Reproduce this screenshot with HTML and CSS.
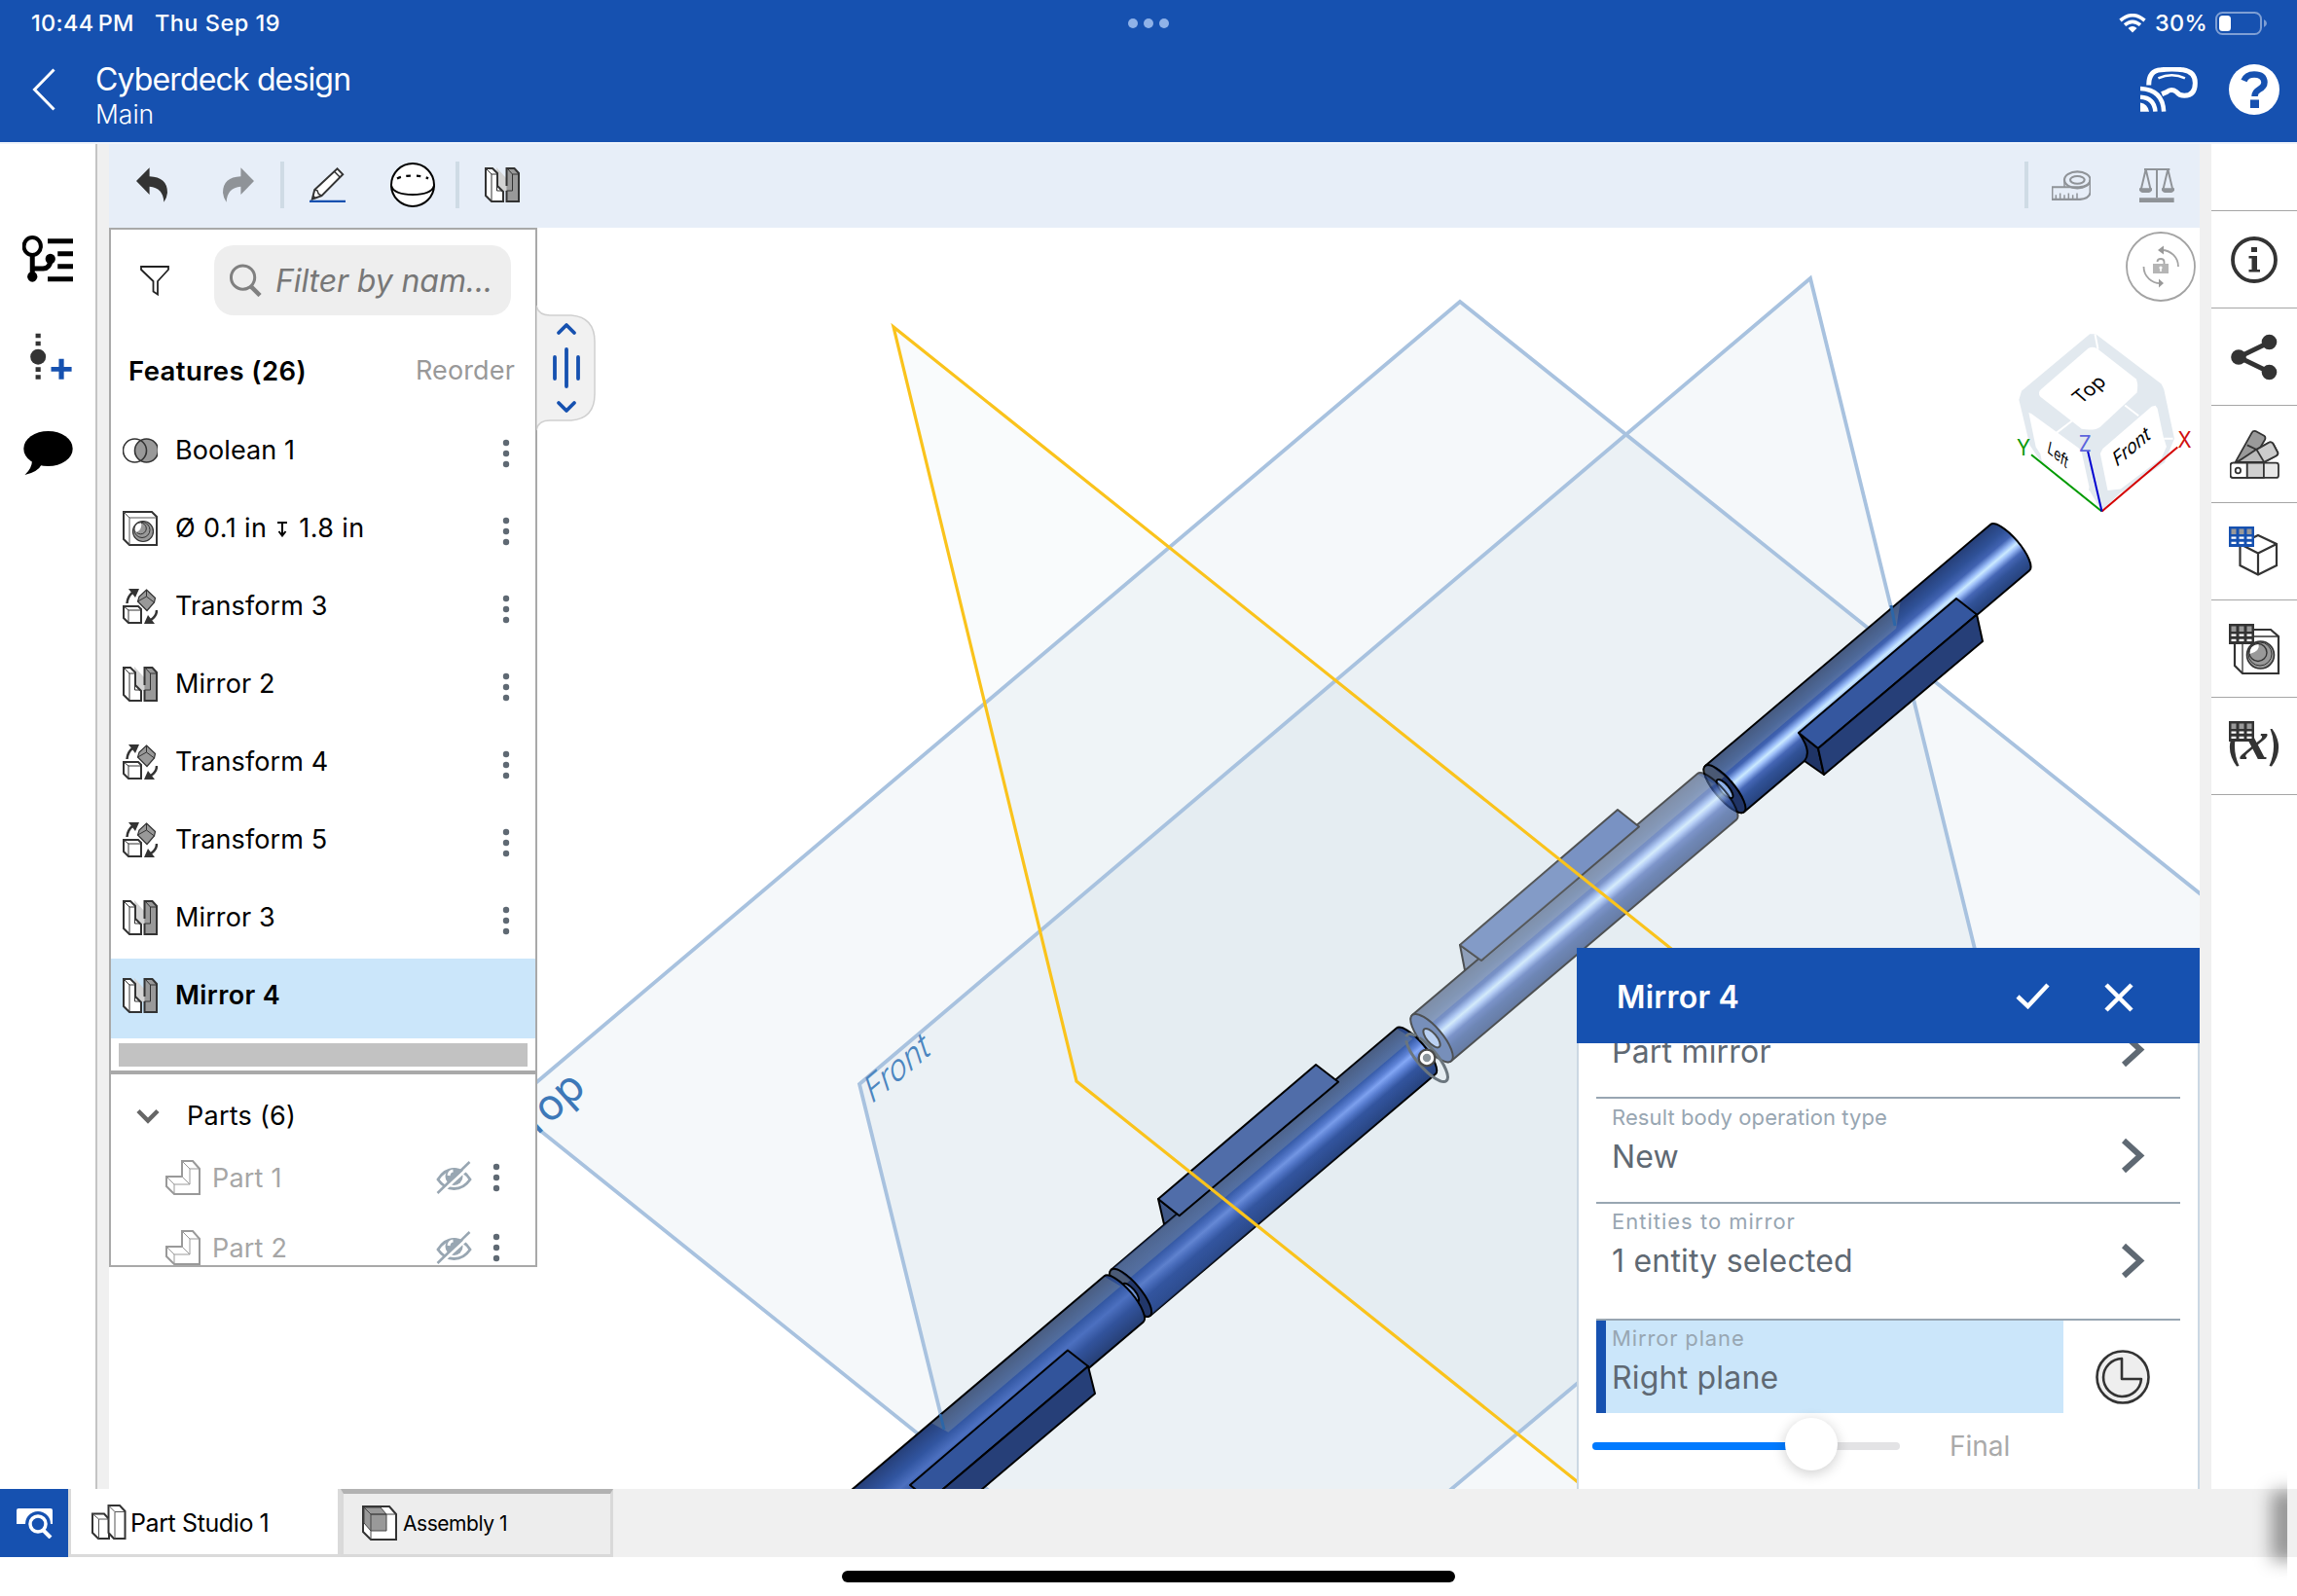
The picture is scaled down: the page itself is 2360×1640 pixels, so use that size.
FILE: index.html
```html
<!DOCTYPE html>
<html lang="en">
<head>
<meta charset="utf-8">
<title>Cyberdeck design</title>
<link rel="stylesheet" href="styles.css">
</head>
<body>
<svg class="defs" width="0" height="0">
  <symbol id="dots" viewBox="0 0 8 30"><g fill="#5f6973"><circle cx="4" cy="4" r="3.2"/><circle cx="4" cy="15" r="3.2"/><circle cx="4" cy="26" r="3.2"/></g></symbol>
  <symbol id="hole" viewBox="0 0 36 36"><path d="M1 1H30L35 6V35H7L1 29Z" fill="#fff" stroke="#333" stroke-width="2"/><path d="M1 1L7 7V35M7 7H35" fill="none" stroke="#555" stroke-width="1"/><circle cx="21" cy="21" r="10.5" fill="#999" stroke="#333" stroke-width="1.2"/><circle cx="20" cy="19.500" r="8" fill="#999" stroke="#333" stroke-width="1"/><circle cx="18.500" cy="18" r="5.800" fill="#999" stroke="#333" stroke-width="1"/><path d="M14 22a5.800 5.800 0 0 1 5-9.500c1 4-1 8-5 9.500Z" fill="#fff"/></symbol>
  <symbol id="transform" viewBox="0 0 36 36"><path d="M24.500 1L33.500 9.500L32.500 14L25 22.500L15.500 13L17 8Z" fill="#999" stroke="#333" stroke-width="1.200"/><path d="M24.500 1V8L15.500 13M24.500 8L32.500 14" fill="none" stroke="#333" stroke-width="1"/><path d="M1 18H16L19 21V35H6L1 30Z" fill="#fff" stroke="#333" stroke-width="2"/><path d="M1 18L6 22V35M6 22H19" fill="none" stroke="#333" stroke-width="1"/><path d="M4.500 15Q5 8 10 4M35 22Q35 28 29 32" fill="none" stroke="#333" stroke-width="2.500"/><path d="M6 0H17L13 9ZM33 36H22L26 27Z" fill="#333"/></symbol>
  <symbol id="mirror" viewBox="0 0 36 36"><path d="M12 0L23 12V25L13 23Z" fill="#d3d3d3"/><path d="M1 1H8L13 6V19L19 25V35H7L1 29Z" fill="#fff" stroke="#333" stroke-width="2"/><path d="M1 1L7 7V35M7 7H13" fill="none" stroke="#333" stroke-width="1"/><path d="M12.500 7V24H18" fill="none" stroke="#333" stroke-width="1"/><path d="M22 1H30L35 6V35H22.500V24Z" fill="#999"/><path d="M22.500 19V1H30.500L35 6V35H22.500V24" fill="none" stroke="#333" stroke-width="2"/><path d="M22.500 24H28.500V7H35M23 1L28.500 7" fill="none" stroke="#333" stroke-width="1"/></symbol>
  <symbol id="part" viewBox="0 0 36 36"><path d="M17 1H28L35 9V35H9L1 27V17H17Z" fill="#fff" stroke="#999" stroke-width="2"/><path d="M17 1L25 9H35M25 9V25H9V35M1 17L9 25M17 17L25 25" fill="none" stroke="#999" stroke-width="1"/></symbol>
  <symbol id="eye" viewBox="0 0 36 34"><path d="M1.500 19Q8 8.500 18 8.500T34.500 19Q28 28.500 18 28.500T1.500 19Z" fill="none" stroke="#98a6b2" stroke-width="2.800"/><circle cx="18" cy="16" r="9" fill="#98a6b2"/><path d="M12.500 15Q13 10.500 17 10" fill="none" stroke="#fff" stroke-width="3"/><path d="M3 34L37 3" stroke="#fff" stroke-width="3"/><path d="M1 33L34 1" stroke="#98a6b2" stroke-width="2.500"/></symbol>
  <symbol id="chev" viewBox="0 0 25 37"><path d="M3 3L20 18.500L3 34" fill="none" stroke="#5f6973" stroke-width="6"/></symbol>
  <symbol id="grid" viewBox="0 0 26 21"><rect width="26" height="21" fill="currentColor"/><g class="gridtop"><rect x="2.500" y="2.500" width="5" height="5.500"/><rect x="10.500" y="2.500" width="5" height="5.500"/><rect x="18.500" y="2.500" width="5" height="5.500"/></g><path d="M2.500 10.500h5v2.300h-5zM10.500 10.500h5v2.300h-5zM18.500 10.500h5v2.300h-5zM2.500 15.700h5v2.300h-5zM10.500 15.700h5v2.300h-5zM18.500 15.700h5v2.300h-5z" fill="#fff"/></symbol>
</svg>

<div class="app">
  <header class="header">
    <div class="status">
      <span class="clock">10:44<i></i>PM</span><span class="date">Thu Sep 19</span>
      <span class="multitask"><b></b><b></b><b></b></span>
      <svg class="wifi" viewBox="0 0 28 20"><g fill="none" stroke="#fff" stroke-width="3.600"><path d="M1.500 7Q14 -3.500 26.500 7"/><path d="M6 11.700Q14 5 22 11.700"/></g><path d="M9.500 15Q14 11 18.500 15L14 19.500Z" fill="#fff"/></svg>
      <span class="pct">30%</span>
      <svg class="batt" viewBox="0 0 54 24"><rect x="1" y="1" width="46" height="22" rx="6.500" fill="none" stroke="#7f9fd4" stroke-width="2"/><rect x="4" y="4" width="12" height="16" rx="3.500" fill="#fff"/><path d="M50 8Q53 9.500 53 12T50 16Z" fill="#7f9fd4"/></svg>
    </div>
    <div class="titlebar">
      <svg class="back" viewBox="0 0 25 44"><path d="M22.500 1.500L2.500 22L22.500 42.500" fill="none" stroke="#fff" stroke-width="3"/></svg>
      <div class="titles"><div class="doc">Cyberdeck design</div><div class="branch">Main</div></div>
      <svg class="vr" viewBox="537 193 176 130" preserveAspectRatio="none"><g fill="none" stroke="#fff"><path d="M563 245Q563 203 600 201Q634 196 668 201Q706 207 705 240Q705 274 672 276Q657 276 648 265Q632 254 618 265L603 271" stroke-width="5"/><path d="M592 225Q634 208 674 225" stroke-width="2.500"/><path d="M537 255Q606 258 609 322M537 280Q580 282 583 322" stroke-width="4.500"/></g><path d="M537 296Q560 300 564 322H537Z" fill="#fff"/></svg>
      <svg class="help" viewBox="0 0 52 52"><circle cx="26" cy="26" r="26" fill="#fff"/><path d="M15.500 17Q18 10.500 26 10.500Q36 10.500 36.500 18.500Q36.500 23 31 26Q26.500 28.500 26.500 33" fill="none" stroke="#1651b0" stroke-width="6.500"/><rect x="22" y="36.500" width="9" height="8.500" fill="#1651b0"/></svg>
    </div>
  </header>

  <div class="main">
    <nav class="leftrail">
      <svg class="tree" viewBox="58 726 132 144" preserveAspectRatio="none"><ellipse cx="84" cy="759" rx="22" ry="27" fill="#fff" stroke="#000" stroke-width="4"/><path d="M84 786V850M84 828H112Q131 826 131 800" fill="none" stroke="#000" stroke-width="5"/><ellipse cx="131" cy="798" rx="13" ry="16"/><ellipse cx="84" cy="853" rx="13" ry="16"/><path d="M124 736h66v15h-66zM150 775h40v15h-40zM150 814h40v15h-40zM124 853h66v15h-66z"/></svg>
      <svg class="node" viewBox="77 1025 108 144" preserveAspectRatio="none"><path d="M91 1027h13v14h-13zM91 1051h13v14h-13zM91 1131h13v14h-13zM91 1155h13v13h-13z" fill="#333"/><ellipse cx="97.500" cy="1099" rx="20" ry="24" fill="#333"/><path d="M151 1105h13v25h20v14h-20v24h-13v-24h-20v-14h20z" fill="#1651b0"/></svg>
      <svg class="chat" viewBox="0 0 51 46"><ellipse cx="25.500" cy="18" rx="25.200" ry="18"/><path d="M9 30Q9 38 1.500 45Q15 42 19 34Z"/></svg>
    </nav>

    <div class="center">
      <div class="toolbar">
        <svg class="undo" viewBox="356 522 80 108" preserveAspectRatio="none"><path d="M356 564L390 523V550Q436 552 436 600Q435 615 427 629Q425 584 390 581V606Z" fill="#333"/></svg>
        <svg class="redo" viewBox="0 0 80 108" preserveAspectRatio="none"><path d="M80 42L46 1V28Q0 30 0 78Q1 93 9 107Q11 62 46 59V84Z" fill="#8f9398"/></svg>
        <i class="sep sep1"></i>
        <svg class="pencil" viewBox="804 518 92 106" preserveAspectRatio="none"><path d="M875 522L889 539L835 604L811 614L817 586Z" fill="#fff" stroke="#333" stroke-width="2"/><path d="M868 531L882 548M817 586L824 588L827 598L835 604" fill="none" stroke="#333" stroke-width="1.500"/><path d="M811 614L814 602L821 610Z" fill="#333"/><path d="M804 621H896" stroke="#1651b0" stroke-width="2.500"/></svg>
        <svg class="sphere" viewBox="0 0 46 46"><circle cx="23" cy="23" r="22" fill="#fff" stroke="#000" stroke-width="2"/><path d="M1 24Q4 33 23 33T45 24" fill="none" stroke="#000" stroke-width="2"/><path d="M7 16.500Q12 13.500 23 13.500T39 16.500" fill="none" stroke="#000" stroke-width="2.200" stroke-dasharray="4.500 5.500"/></svg>
        <i class="sep sep2"></i>
        <svg class="f36 tmirror"><use href="#mirror"/></svg>
        <i class="sep sep3"></i>
        <svg class="tape" viewBox="264 488 120 88" preserveAspectRatio="none"><g fill="none" stroke="#8f9398" stroke-width="2.200"><path d="M265 537H348Q383 535 383 514V552Q380 571 350 573H265Z"/><ellipse cx="343" cy="516" rx="40" ry="24"/><ellipse cx="343" cy="516" rx="22" ry="11"/><path d="M303 516V537M277 573V560M290 573V555M303 573V560M316 573V555M329 573V560M342 573V555" stroke-width="1.500"/></g></svg>
        <svg class="scales" viewBox="534 483 108 98" preserveAspectRatio="none"><g fill="none" stroke="#8f9398" stroke-width="2"><path d="M549 486H628M588 486V568"/><path d="M554 486L539 545M554 486L569 545M622 486L607 545M622 486L637 545"/></g><path d="M534 540h39v7q-4 5-9 6h-21q-5-1-9-6zM603 540h39v7q-4 5-9 6h-21q-5-1-9-6zM534 568h107v13h-107z" fill="#8f9398"/></svg>
      </div>

      <div class="stage">
        <svg class="canvas" viewBox="112 234 2148 1296" width="2148" height="1296">
          <defs>
            <linearGradient id="ga" x1="0" y1="-31" x2="0" y2="31" gradientUnits="userSpaceOnUse"><stop offset="0" stop-color="#263f78"/><stop offset=".22" stop-color="#2f5197"/><stop offset=".36" stop-color="#4163b2"/><stop offset=".46" stop-color="#95b8f6"/><stop offset=".52" stop-color="#cbeaff"/><stop offset=".58" stop-color="#9cbdf8"/><stop offset=".68" stop-color="#4667b6"/><stop offset=".8" stop-color="#315297"/><stop offset="1" stop-color="#26427c"/></linearGradient>
            <linearGradient id="gc" x1="0" y1="-31" x2="0" y2="31" gradientUnits="userSpaceOnUse"><stop offset="0" stop-color="#263f78"/><stop offset=".3" stop-color="#3459a6"/><stop offset=".44" stop-color="#5f84d8"/><stop offset=".51" stop-color="#86aaf8"/><stop offset=".6" stop-color="#5d82d6"/><stop offset=".72" stop-color="#33559f"/><stop offset="1" stop-color="#26427c"/></linearGradient>
            <linearGradient id="gd" x1="0" y1="-31" x2="0" y2="31" gradientUnits="userSpaceOnUse"><stop offset="0" stop-color="#263f78"/><stop offset=".3" stop-color="#3155a0"/><stop offset=".5" stop-color="#4c70c0"/><stop offset=".7" stop-color="#32539c"/><stop offset="1" stop-color="#263f75"/></linearGradient>
            <linearGradient id="dim" x1="0" y1="0" x2="384" y2="0" gradientUnits="userSpaceOnUse"><stop offset="0" stop-color="#33559f" stop-opacity=".55"/><stop offset="1" stop-color="#33559f" stop-opacity="0"/></linearGradient>
            <path id="tube" d="M0 -31H384A10 31 0 0 1 384 31H0A10 31 0 0 1 0 -31Z"/>
          </defs>
          <g fill="#5a90b0" fill-opacity=".06">
            <path d="M523 1136L1500 310L2400 1030V1800H1350Z"/>
            <path d="M883 1114L1860 286L2050 1061L1072 1882Z"/>
            <path d="M918 336L1716 974L2400 1521V1900H2090L1106 1111Z" fill="#6c98b8" fill-opacity=".045"/>
          </g>
          <g fill="none" stroke="#a8c2df" stroke-width="3.800">
            <path d="M1350 1800L523 1136L1500 310L2400 1030"/>
            <path d="M883 1114L1860 286L2050 1061L1072 1882Z"/>
          </g>
          <text class="plane" transform="translate(562 1158) rotate(-42)" x="-22" y="0" font-size="44" fill="#3d78b8">Top</text>
          <text class="plane" transform="translate(895 1135) rotate(-40) skewX(-22)" x="0" y="0" font-size="34" font-weight="300" fill="#4c86c0">Front</text>

          <g stroke-linejoin="round" stroke="#000" stroke-width="2">
            <g transform="translate(1772 810.700) rotate(-40.250)">
              <use href="#tube" fill="url(#ga)"/>
              <path d="M4 -30H262L241 -12H10Z" fill="#c8c8a0" fill-opacity=".2" stroke="none"/>
              <ellipse rx="10" ry="31" fill="#203466"/><path d="M-5 -27Q0 -34 5 -25L8 -10H-9Z" fill="#c8c8a0" fill-opacity=".25" stroke="none"/>
              <ellipse rx="4.500" ry="12" fill="#8fb2ea"/>
            </g>
            <path d="M1848 753L1868 769L1874 796L1854 782Q1862 772 1848 753Z" fill="#1f3466"/>
            <path d="M1848 753L2010 615L2031 631.500L1868 769Z" fill="#35579f"/>
            <path d="M1868 769L2031 631.500L2037 659L1874 796Z" fill="#263f78"/>
          </g>
          <path d="M1943 622L1947 643" stroke="#2c66a8" stroke-width="3"/>

          <g stroke-linejoin="round" stroke="#000" stroke-width="2">
            <path d="M1190 1232L1211.700 1249.300L1196 1258Z" fill="#405888"/>
            <g transform="translate(1161.700 1328.300) rotate(-40.250)">
              <use href="#tube" fill="url(#gc)"/>
              <use href="#tube" fill="url(#dim)" stroke="none"/>
              <path d="M4 -30H384L390 -12H10Z" fill="#c8c8a0" fill-opacity=".22" stroke="none"/>
              <ellipse rx="10" ry="31" fill="#22376a"/><path d="M-5 -27Q0 -34 5 -25L8 -10H-9Z" fill="#c8c8a0" fill-opacity=".25" stroke="none"/>
              <ellipse rx="4.500" ry="12" fill="#7092d4"/>
            </g>
            <path d="M1190 1232L1352 1094L1375 1111.700L1211.700 1249.300Z" fill="#506da9"/>
            <g transform="translate(861.500 1583) rotate(-40.250)">
              <use href="#tube" fill="url(#gd)"/>
              <path d="M151 -30H384L390 -12H158Z" fill="#c8c8a0" fill-opacity=".22" stroke="none"/>
            </g>
            <path d="M935 1526L1097 1387.500L1118 1404L955 1542Z" fill="#32549b"/>
            <path d="M1118 1404L1125 1432L962 1570L955 1542Z" fill="#263f78"/>
          </g>
          <path d="M966 1453L970 1469" stroke="#2c66a8" stroke-width="3"/>

          <g opacity=".66" stroke-linejoin="round" stroke="#000" stroke-width="2">
            <path d="M1500 971L1522 987L1505 997Z" fill="#64789c"/>
            <g transform="translate(1471 1066.700) rotate(-40.250)">
              <use href="#tube" fill="url(#ga)"/>
              <path d="M4 -30H384L390 -12H10Z" fill="#c8c8a0" fill-opacity=".22" stroke="none"/>
              <ellipse rx="11" ry="31" fill="#3f5f9e"/>
              <ellipse rx="5" ry="12" fill="#a6c4f2"/>
            </g>
            <path d="M1500 971L1662 832L1684 849.500L1522 987Z" fill="#3f62aa"/>
            <path d="M1500 971L1601 884.500L1623 901.500L1522 987Z" fill="#fff" fill-opacity=".1" stroke="none"/>
          </g>
          <g transform="translate(1466 1087) rotate(-40.250)">
            <ellipse rx="10" ry="31" fill="none" stroke="#6b767e" stroke-width="3" stroke-dasharray="96 4 12 4"/>
          </g>
          <circle cx="1466" cy="1087" r="8" fill="#8a949b" stroke="#4a4a4a" stroke-width="3"/>
          <circle cx="1466" cy="1087" r="5.700" fill="#8a949b" stroke="#fff" stroke-width="3"/>
          <path d="M2090 1898L1106 1111L918 336L2400 1521" fill="none" stroke="#fac31c" stroke-width="3.200"/>
        </svg>

        <svg class="cube" viewBox="155 950 545 530" preserveAspectRatio="none">
          <path d="M380 962L398 962L600 1105L608 1120L640 1262L610 1330L470 1420L417 1470L380 1412L228 1325L195 1280L162 1150L170 1125Z" fill="#e2e9ef"/>
          <g fill="#fff"><path d="M375 1003Q390 995 405 1005L522 1090Q530 1100 525 1130L412 1228Q395 1240 355 1234L228 1142Q218 1130 230 1120Z"/>
          <path d="M192 1187L200 1190L345 1288Q352 1292 356 1305L378 1400L376 1412L362 1408L232 1325L228 1306L214 1286Z"/>
          <path d="M412 1304L420 1290L570 1170L582 1167L588 1175L606 1255L616 1285L600 1318L475 1406L435 1410Z"/></g>
          <path d="M396 962L405 1005M276 1246L326 1210M488 1166L530 1196M636 1262L608 1262" fill="none" stroke="#fff" stroke-width="2"/>
          <path d="M200 1308L417 1470" stroke="#009a00" stroke-width="2"/><path d="M417 1470L650 1286" stroke="#d40000" stroke-width="2"/><path d="M417 1470L374 1298" stroke="#0000d0" stroke-width="2"/>
          <g class="plane" fill="#000">
            <text transform="translate(352 1164) scale(1 .93) rotate(-39) skewX(10)" font-size="59">Top</text>
            <text transform="translate(248 1300) scale(1 .93) rotate(40) skewX(28)" font-size="44">Left</text>
            <text transform="translate(462 1344) scale(1 .93) rotate(-40) skewX(-22)" font-size="57">Front</text>
          </g>
          <g class="plane" font-size="62">
            <text x="155" y="1311" fill="#0a9a0a">Y</text><text x="346" y="1299" fill="#5c64dc">Z</text><text x="651" y="1287" fill="#d01010">X</text>
          </g>
        </svg>

        <svg class="lock" viewBox="0 0 72 72"><g fill="none" stroke="#a3a3a3"><circle cx="36" cy="36" r="35" stroke-width="1.800"/><path d="M37 19A17 17 0 0 1 54 36M18.500 36A17 17 0 0 0 37 53" stroke-width="1.800"/><path d="M32.500 31Q32.500 28 36 28T39.500 31V33" stroke-width="1.800"/></g><path d="M33 19L39 14.500V23.500ZM39 53L34 48.500V57.500Z" fill="#999"/><path d="M28 33h16v10h-16z" fill="#b5b5b5"/><circle cx="36" cy="37" r="1.600" fill="#fff"/><path d="M35.200 37h1.600v4h-1.600z" fill="#fff"/></svg>

        <aside class="panel">
          <div class="search-row">
            <svg class="funnel" viewBox="0 0 30 31"><path d="M1 1H29V4L18 16V29.500L13.500 26.500V16L1 4Z" fill="none" stroke="#222" stroke-width="1.800"/></svg>
            <div class="search"><svg class="mag" viewBox="0 0 34 34"><circle cx="14" cy="14" r="12.500" fill="none" stroke="#808080" stroke-width="3"/><path d="M22 23L32 33" stroke="#808080" stroke-width="4.500"/></svg><span>Filter by nam...</span></div>
          </div>
          <div class="fhead"><strong>Features (26)</strong><span>Reorder</span></div>
          <ul class="features">
            <li><svg class="f36" viewBox="0 0 36 36"><circle cx="12.500" cy="18" r="12" fill="#fff"/><circle cx="24.500" cy="18" r="12" fill="#999"/><circle cx="12.500" cy="18" r="12" fill="none" stroke="#333" stroke-width="1.600"/><circle cx="24.500" cy="18" r="12" fill="none" stroke="#333" stroke-width="1.600"/></svg><span>Boolean 1</span><svg class="dots"><use href="#dots"/></svg></li>
            <li><svg class="f36"><use href="#hole"/></svg><span class="dia">Ø 0.1 in <svg class="depth" viewBox="0 0 10 16"><path d="M0 1H10M5 1V14M1.500 10L5 14.500L8.500 10" fill="none" stroke="#000" stroke-width="2"/></svg> 1.8 in</span><svg class="dots"><use href="#dots"/></svg></li>
            <li><svg class="f36"><use href="#transform"/></svg><span>Transform 3</span><svg class="dots"><use href="#dots"/></svg></li>
            <li><svg class="f36"><use href="#mirror"/></svg><span>Mirror 2</span><svg class="dots"><use href="#dots"/></svg></li>
            <li><svg class="f36"><use href="#transform"/></svg><span>Transform 4</span><svg class="dots"><use href="#dots"/></svg></li>
            <li><svg class="f36"><use href="#transform"/></svg><span>Transform 5</span><svg class="dots"><use href="#dots"/></svg></li>
            <li><svg class="f36"><use href="#mirror"/></svg><span>Mirror 3</span><svg class="dots"><use href="#dots"/></svg></li>
            <li class="selected"><svg class="f36"><use href="#mirror"/></svg><span>Mirror 4</span></li>
          </ul>
          <div class="rollback"></div>
          <div class="parts">
            <div class="phead"><svg class="caret" viewBox="0 0 24 16"><path d="M2 2.500L12 12.500L22 2.500" fill="none" stroke="#666" stroke-width="4.500"/></svg>Parts (6)</div>
            <div class="prow"><svg class="f36"><use href="#part"/></svg><span>Part 1</span><svg class="eye"><use href="#eye"/></svg><svg class="dots"><use href="#dots"/></svg></div>
            <div class="prow"><svg class="f36"><use href="#part"/></svg><span>Part 2</span><svg class="eye"><use href="#eye"/></svg><svg class="dots"><use href="#dots"/></svg></div>
          </div>
        </aside>

        <svg class="handle" viewBox="0 0 62 130"><path d="M0 1Q2 11 14 11H36Q60 13 60 38V92Q60 117 36 119H14Q2 119 0 129Z" fill="#f1f1f1" stroke="#cfcfcf" stroke-width="1.500"/><g fill="none" stroke="#1651b0" stroke-width="3.800" stroke-linecap="round" stroke-linejoin="round"><path d="M23 29L31 21L39 29M23 101L31 109L39 101M19 54V76M31 46V84M43 54V76"/></g></svg>

        <section class="dialog">
          <div class="dhead"><h2>Mirror 4</h2>
            <svg class="ok" viewBox="0 0 35 27"><path d="M2 14L12.500 24L33 2" fill="none" stroke="#fff" stroke-width="4.500"/></svg>
            <svg class="no" viewBox="0 0 30 30"><path d="M2 2L28 28M28 2L2 28" fill="none" stroke="#fff" stroke-width="4.500"/></svg>
          </div>
          <div class="dbody">
            <div class="field r1"><div class="txt"><b>Part mirror</b></div><svg class="chev"><use href="#chev"/></svg></div>
            <div class="field r2"><div class="txt"><small>Result body operation type</small><b>New</b></div><svg class="chev"><use href="#chev"/></svg></div>
            <div class="field r3"><div class="txt"><small>Entities to mirror</small><b>1 entity selected</b></div><svg class="chev"><use href="#chev"/></svg></div>
            <div class="planerow">
              <div class="active"><small>Mirror plane</small><b>Right plane</b></div>
              <svg class="mate" viewBox="0 0 56 56"><circle cx="28" cy="28" r="26.500" fill="#eee" stroke="#333" stroke-width="2.600"/><path d="M27 9V30H47A19.500 19.500 0 1 1 27 9Z" fill="#eee" stroke="#333" stroke-width="2.600" stroke-linejoin="round"/></svg>
            </div>
            <div class="sliderrow"><div class="track"><i></i><em></em></div><span>Final</span></div>
          </div>
        </section>
      </div>
    </div>

    <nav class="rightrail">
      <div class="cell first"></div>
      <div class="cell"><svg class="c46" viewBox="0 0 48 48"><circle cx="24" cy="24" r="22" fill="none" stroke="#333" stroke-width="3.800"/><path d="M21 11h6v5h-6zM18.500 20h8.500v14h3v2.500h-11.500V34h3V22.500h-3z" fill="#333"/></svg></div>
      <div class="cell"><svg class="c46" viewBox="0 0 48 48"><path d="M40 8.500L8 24L40 39.500" fill="none" stroke="#333" stroke-width="4.800"/><circle cx="8" cy="24" r="7.800" fill="#333"/><circle cx="39.500" cy="8.500" r="7.800" fill="#333"/><circle cx="39.500" cy="39.500" r="7.800" fill="#333"/></svg></div>
      <div class="cell"><svg class="swatch" viewBox="815 1237 152 140" preserveAspectRatio="none"><g stroke="#333" stroke-width="1.800" stroke-linejoin="round"><path d="M832 1329L882 1245Q886 1238 894 1240L920 1253Q926 1257 922 1265L897 1305Z" fill="#999"/><path d="M868 1280L908 1298" fill="none"/><path d="M838 1329L895 1293L936 1272Q944 1270 948 1277L962 1302Q963 1309 955 1312L920 1329Z" fill="#bbb"/><path d="M897 1293L936 1272Q944 1270 948 1277L962 1302Q963 1309 955 1312L920 1329Z" fill="#ccc"/><rect x="817" y="1331" width="147" height="43" rx="7" fill="#e8e8e8"/><path d="M817 1338Q818 1331 824 1331H868V1374H824Q817 1373 817 1367Z" fill="#fff"/><path d="M868 1331H919V1374H868Z" fill="#d0d0d0"/><ellipse cx="840" cy="1353" rx="8" ry="8" fill="#fff"/></g></svg></div>
      <div class="cell"><svg class="c52 bluegrid" viewBox="1 0 52 52"><path d="M31 9L50 18V40L31 49.500L12.500 40V18Z" fill="#fff" stroke="#333" stroke-width="2.200"/><path d="M12.500 18L31 27.500L50 18M31 27.500V49" fill="none" stroke="#333" stroke-width="2.200"/><use href="#grid" x="1" y="0" width="26" height="21"/></svg></div>
      <div class="cell"><svg class="c52" viewBox="1 0 52 52"><path d="M7 6H44L52 13V51H15L7 43Z" fill="#fff" stroke="#333" stroke-width="2.200"/><path d="M15 51V13H52" fill="none" stroke="#333" stroke-width="1.300"/><circle cx="33.500" cy="32" r="14" fill="#999" stroke="#333" stroke-width="1.600"/><circle cx="33" cy="31" r="12" fill="#999" stroke="#333" stroke-width="1"/><circle cx="31" cy="29.500" r="9" fill="#999" stroke="#333" stroke-width="1.400"/><path d="M22.500 31Q22 22 31.500 21Q33.500 28 22.500 31Z" fill="#fff"/><use href="#grid" x="1" y="0" width="26" height="21"/></svg></div>
      <div class="cell"><svg class="c52" viewBox="1 0 52 52"><text x="13" y="39" class="xvar">x</text><path d="M45.500 8Q59 27 45 46.500L42.500 46Q51 27 43.500 8ZM8.500 8Q-5 27 9 46.500L11.500 46Q3 27 10.500 8Z" fill="#333"/><use href="#grid" x="1" y="0" width="26" height="21"/></svg></div>
    </nav>
  </div>

  <footer class="tabs">
    <div class="tabsearch"><svg viewBox="0 0 37 31" class="tsicon"><path d="M2 0H35Q37 0 37 2V16H0V2Q0 0 2 0Z" fill="#fff"/><circle cx="22" cy="16" r="13" fill="#1651b0"/><circle cx="22" cy="16" r="8" fill="none" stroke="#fff" stroke-width="3.500"/><path d="M27 22L35 30" stroke="#fff" stroke-width="4"/></svg></div>
    <div class="tab tab-active"><svg class="f36" viewBox="0 0 36 36"><g fill="#fff" stroke="#333" stroke-width="2"><path d="M1 9.500H13L18 15V35H7L1 29Z"/><path d="M17.500 1H29L34.500 7V35H23L17.500 29Z"/></g><path d="M1 9.500L7.500 15V35M7.500 15H18M17.500 1L24 7.500V35M24 7.500H34" fill="none" stroke="#555" stroke-width="1"/></svg><span>Part Studio 1</span></div>
    <div class="tab tab-idle"><svg class="f36" viewBox="0 0 36 36"><path d="M1 1H28L35 9V35H9L1 27Z" fill="#fff" stroke="#333" stroke-width="2"/><path d="M2 2H19L25 9V26H9L2 18Z" fill="#999" stroke="#444" stroke-width="1"/><path d="M2 2L9 9H35M9 9V35M9 9H25" fill="none" stroke="#444" stroke-width="1"/></svg><span>Assembly 1</span></div>
    <div class="edge"><i></i></div>
  </footer>
  <div class="homebar"><i></i></div>
</div>
</body>
</html>
```

FILE: styles.css
```css
* { box-sizing: border-box; }
body { margin: 0; font-family: Inter, "Liberation Sans", sans-serif; background: #fff; color: #000; }
svg { display: block; flex: none; }
svg * { vector-effect: non-scaling-stroke; }
.defs { position: absolute; }
.app { width: 2360px; height: 1640px; display: flex; flex-direction: column; overflow: hidden; white-space: nowrap; }

/* header */
.header { height: 148px; background: #1651b0; border-bottom: 2px solid #eef3fb; color: #fff; }
.status { height: 48px; display: flex; align-items: center; padding: 0 30px 1px 32px; font-size: 23.5px; font-weight: 500; position: relative; }
.clock { letter-spacing: .35px; }
.clock i { display: inline-block; width: 4px; }
.date { margin-left: 21px; letter-spacing: .5px; }
.multitask { position: absolute; left: 1159px; top: 19px; display: flex; gap: 6px; }
.multitask b { width: 10px; height: 10px; border-radius: 50%; background: #8fb2e8; }
.wifi { width: 28px; height: 20px; margin-left: auto; margin-right: 9px; }
.pct { width: 53px; margin-right: 9px; letter-spacing: .3px; }
.batt { width: 54px; height: 24px; }
.titlebar { height: 98px; display: flex; padding: 22px 18px 0 33px; }
.back { width: 25px; height: 44px; }
.titles { margin-left: 40px; margin-top: -6px; flex: 1; }
.doc { font-size: 32px; line-height: 36px; letter-spacing: -.85px; }
.branch { font-size: 26.5px; line-height: 35px; font-weight: 300; }
.vr { width: 59px; height: 46px; margin-right: 32px; margin-top: -1px; }
.help { width: 52px; height: 52px; margin-top: -4px; }

/* frame */
.main { height: 1382px; display: flex; }
.leftrail { width: 112px; border-right: 12px solid #f0f0f0; box-shadow: inset -2px 0 #c4c4c4; padding: 94px 0 0 23px; display: flex; flex-direction: column; }
.tree { width: 52px; height: 48px; }
.node { width: 43px; height: 48px; margin: 52px 0 0 8px; }
.chat { width: 51px; height: 46px; margin: 53px 0 0 1px; }
.center { width: 2148px; display: flex; flex-direction: column; }
.rightrail { width: 100px; border-left: 12px solid #f0f0f0; }
.cell { height: 100px; border-bottom: 1px solid #a6a6a6; display: flex; align-items: center; justify-content: center; }
.first { height: 69px; }
.c46 { width: 48px; height: 48px; }
.c52 { width: 52px; height: 52px; color: #333; overflow: visible; }
.swatch { width: 51px; height: 50px; }
.gridtop { fill: #999; }
.bluegrid { color: #1651b0; }
.bluegrid .gridtop { fill: #86c5f5; }
.xvar { font: italic bold 58px "Liberation Serif", serif; fill: #333; }

/* toolbar */
.toolbar { height: 86px; background: #e7eef8; display: flex; align-items: center; padding: 0 26px 2px 28px; }
.undo, .redo { width: 32px; height: 36px; }
.redo { margin-left: 57px; }
.sep { width: 4px; height: 48px; background: #cfdbe5; }
.sep1 { margin-left: 27px; }
.pencil { width: 37px; height: 36px; margin-left: 26px; }
.sphere { width: 46px; height: 46px; margin-left: 46px; }
.sep2 { margin-left: 21px; }
.f36 { width: 36px; height: 36px; }
.tmirror { margin-left: 26px; }
.sep3 { margin-left: auto; }
.tape { width: 40px; height: 31px; margin-left: 24px; }
.scales { width: 36px; height: 35px; margin-left: 50px; }

/* canvas */
.stage { height: 1296px; position: relative; display: flex; justify-content: space-between; align-items: flex-start; }
.canvas, .cube, .lock, .handle { position: absolute; }
.canvas { left: 0; top: 0; }
.plane { font-family: Inter, sans-serif; }
.cube { left: 1960px; top: 105px; width: 182px; height: 190px; overflow: visible; }
.lock { left: 2072px; top: 4px; width: 72px; height: 72px; }
.handle { left: 439px; top: 79px; width: 62px; height: 130px; }

/* feature panel */
.panel { position: relative; width: 440px; height: 1068px; background: #fff; border: 2px solid #a9a9a9; overflow: hidden; display: flex; flex-direction: column; }
.panel > * { flex: none; }
.search-row { display: flex; align-items: center; padding: 16px 0 0 30px; }
.funnel { width: 30px; height: 31px; }
.search { width: 305px; height: 72px; margin-left: 46px; background: #eee; border-radius: 20px; display: flex; align-items: center; padding-left: 16px; color: #777; font-size: 32px; font-style: italic; letter-spacing: -.1px; }
.mag { width: 33px; height: 34px; margin-right: 14px; }
.fhead { height: 101px; padding: 12px 21px 0 18px; display: flex; align-items: center; justify-content: space-between; font-size: 27px; color: #999; letter-spacing: .15px; }
.fhead strong { color: #000; font-weight: 600; font-size: 27.5px; letter-spacing: .4px; }
.features { list-style: none; margin: 0; padding: 0; font-size: 27px; }
.features li { height: 80px; padding: 0 26px 5px 12px; display: flex; align-items: center; }
.features li span { margin-left: 18px; flex: 1; letter-spacing: .1px; }
.features li .dia { letter-spacing: .4px; }
.dots { width: 8px; height: 30px; }
.features .dots { margin-top: 7px; }
.depth { display: inline-block; width: 10px; height: 16px; margin: 0 4px 0 3px; }
.features .selected { height: 82px; padding-bottom: 7px; background: #cbe6fa; font-weight: 600; }
.features .selected span { letter-spacing: .4px; }
.rollback { height: 24px; margin: 5px 8px 4px; background: #c2c2c2; }
.parts { border-top: 4px solid #a9a9a9; font-size: 27px; }
.phead { height: 70px; display: flex; align-items: center; padding: 15px 0 0 26px; letter-spacing: .25px; }
.caret { width: 24px; height: 16px; margin-right: 28px; }
.prow { height: 72px; display: flex; align-items: center; padding: 0 36px 0 56px; color: #a6a6a6; }
.prow span { margin-left: 12px; flex: 1; letter-spacing: .2px; }
.eye { width: 37px; height: 34px; margin-right: 21px; }

/* dialog */
.dialog { position: relative; width: 640px; height: 556px; margin-top: 740px; display: flex; flex-direction: column; }
.dhead { height: 98px; background: #1651b0; color: #fff; display: flex; align-items: center; padding: 0 68px 0 41px; }
.dhead h2 { margin: 0; flex: 1; font-size: 32px; font-weight: 600; padding-top: 2px; letter-spacing: .2px; }
.ok { width: 35px; height: 27px; margin-right: 56px; }
.no { width: 30px; height: 30px; margin-top: 3px; }
.dbody { height: 458px; background: #fff; border: solid #cbd8e3; border-width: 0 2px; padding: 0 18px; overflow: hidden; color: #5f6973; }
.field { display: flex; align-items: flex-start; justify-content: space-between; border-bottom: 2px solid #98a6b2; padding: 0 36px 0 16px; }
.field b, .active b { display: block; font-weight: 400; font-size: 32px; line-height: 40px; letter-spacing: .2px; }
.field small, .active small { display: block; font-size: 22px; line-height: 28px; color: #98a6b2; letter-spacing: .85px; }
.field.r2 small { letter-spacing: .1px; }
.field.r3 small { letter-spacing: 1px; }
.chev { width: 25px; height: 37px; }
.r1 { height: 57px; }
.r1 b { margin-top: -11px; }
.r1 .chev { margin-top: -12px; }
.r2 { height: 108px; }
.r3 { height: 120px; }
.r2 .txt { margin-top: 5px; }
.r3 .txt { margin-top: 4px; }
.r2 .chev, .r3 .chev { margin-top: 40px; }
.field small + b, .active small + b { margin-top: 7px; }
.planerow { height: 95px; display: flex; align-items: center; }
.active { width: 480px; height: 95px; background: #cbe6fa; border-left: 10px solid #1651b0; padding: 4px 0 0 6px; }
.mate { width: 56px; height: 56px; margin: 20px 0 0 33px; }
.sliderrow { height: 68px; display: flex; align-items: center; margin-left: -4px; color: #aaa; font-size: 28px; }
.track { width: 316px; height: 8px; border-radius: 4px; background: #e3e3e5; margin-right: 51px; position: relative; }
.track i { display: block; width: 225px; height: 8px; border-radius: 4px; background: #007aff; }
.track em { position: absolute; left: 198px; top: -25px; width: 54px; height: 54px; border-radius: 50%; background: #fff; box-shadow: 0 3px 14px rgba(0,0,0,.2); }

/* bottom */
.tabs { height: 70px; background: #f0f0f0; display: flex; position: relative; }
.tabsearch { width: 70px; background: #1651b0; display: flex; align-items: center; justify-content: center; }
.tsicon { width: 37px; height: 31px; }
.tab { display: flex; align-items: center; }
.tab-active { width: 280px; background: #fff; border: solid #dadada; border-width: 0 3px 3px; padding-left: 21px; font-size: 25px; letter-spacing: -.4px; }
.tab-active span { margin: 2px 0 0 4px; }
.tab-idle { width: 280px; background: #ededed; border: 3px solid #d9d9d9; border-top: 5px solid #b2b2b2; padding-left: 19px; font-size: 21px; letter-spacing: -.45px; }
.tab-idle span { margin: -2px 0 0 6px; }
.tab-idle .f36 { margin-top: -2px; }
.edge { position: absolute; left: 2300px; top: -20px; width: 50px; height: 120px; overflow: hidden; }
.edge i { position: absolute; left: 34px; top: 22px; width: 30px; height: 72px; background: rgba(0,0,0,.38); filter: blur(9px); }
.homebar { height: 40px; display: flex; justify-content: center; padding-top: 14px; }
.homebar i { width: 630px; height: 12px; border-radius: 6px; background: #000; }
```
